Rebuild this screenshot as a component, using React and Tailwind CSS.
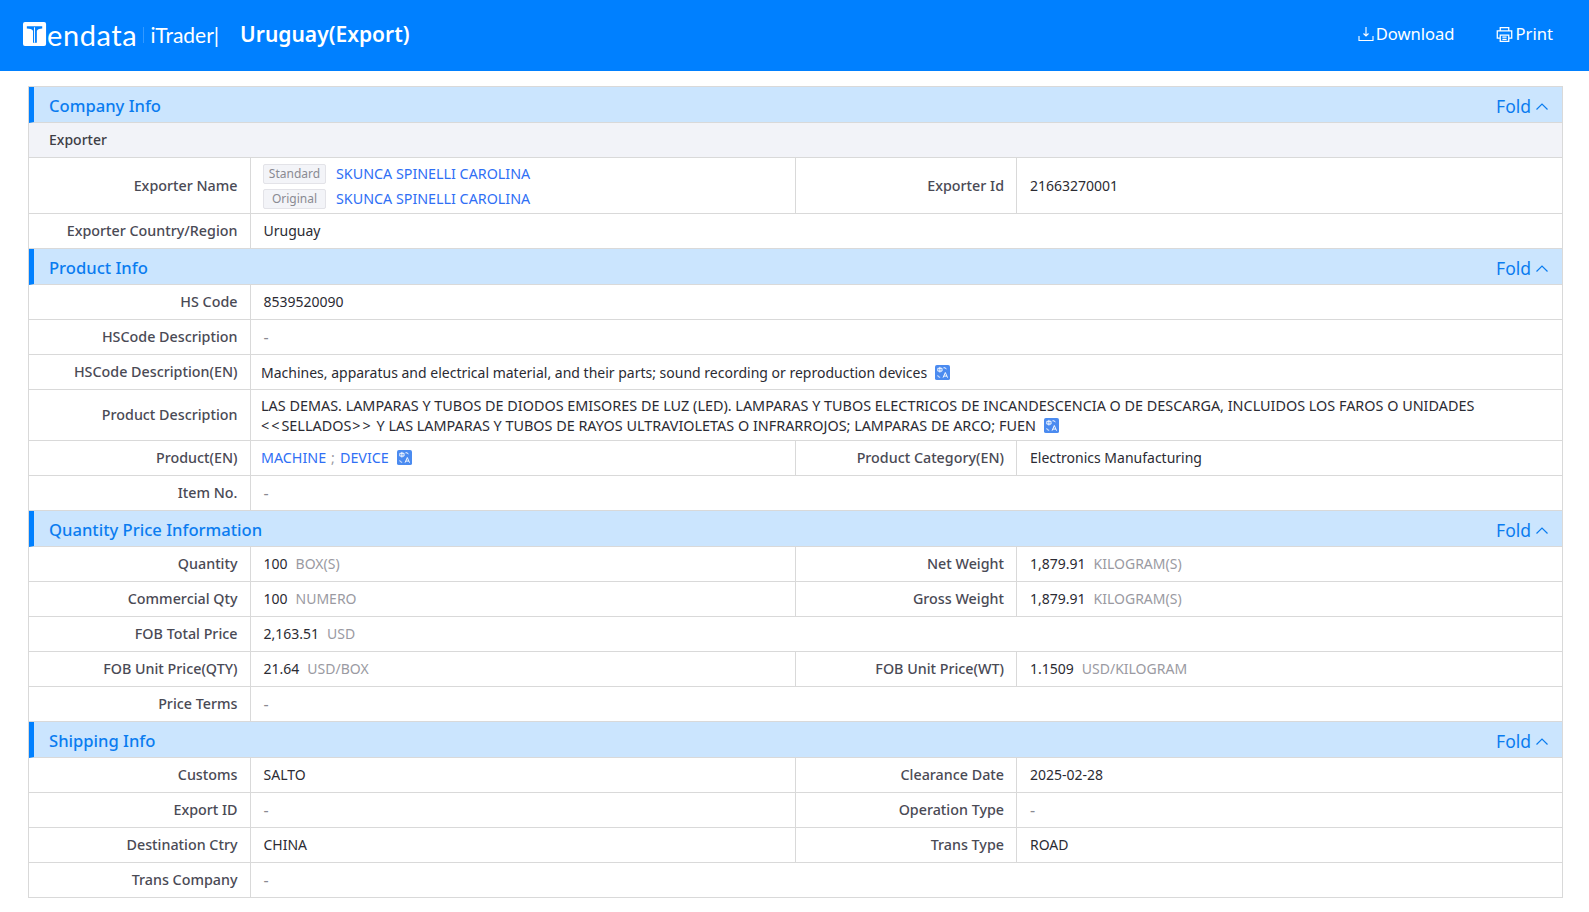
import React from "react";

const FONT = "font-['Noto_Sans','Open_Sans',sans-serif]";

function Translate() {
  return (
    <svg viewBox="0 0 16 16" className="inline-block w-[15px] h-[15px] ml-2 align-[-2px]">
      <rect width="16" height="16" rx="2" fill="#4b8bf0" />
      <path d="M3 3.5h4.5v3H3zM5.2 2v6M3 11c0 1.5 1 2 2.5 2M9 3h2l1 1.5M11 8l-2.4 5.5M11 8l2.4 5.5M9.4 11.8h3.2" stroke="#fff" strokeWidth="1" fill="none" />
    </svg>
  );
}

function Section({ children }) {
  return (
    <div className="h-[36px] flex items-center justify-between bg-[#cbe5fe] border-l-[5px] border-[#0080ff] border-b border-b-[#d9d9d9] pl-[15px] pr-[14px]">
      <span className="text-[16.6px] font-medium text-[#0a7cf0] mt-[3px]">{children}</span>
      <span className="flex items-center text-[17.5px] text-[#0a7cf0] mt-[4px]">
        Fold
        <svg viewBox="0 0 12 7" className="w-[12px] h-[7px] ml-[5px]" fill="none" stroke="#0a7cf0" strokeWidth="1.2">
          <path d="M0.5 6.5 6 1l5.5 5.5" />
        </svg>
      </span>
    </div>
  );
}

function Label({ children, first }) {
  return (
    <div className={`${first ? "w-[222px] pr-[12.5px]" : "w-[221px] pr-[12px]"} shrink-0 flex items-center justify-end border-r border-[#d9d9d9] text-[14.3px] font-medium text-[#4a4a55]`}>
      {children}
    </div>
  );
}

function Val({ children, className = "pl-[13px] pb-[1px] text-[14px]" }) {
  return (
    <div className={`flex-1 flex items-center text-[#2b2b33] min-w-0 ${className}`}>
      {children}
    </div>
  );
}

function Mid({ children }) {
  return (
    <div className="w-[545px] shrink-0 flex items-center pl-[12.5px] pb-[1px] border-r border-[#d9d9d9] text-[14px] text-[#2b2b33]">
      {children}
    </div>
  );
}

function Row({ label, children, h = "h-[35px]" }) {
  return (
    <div className={`flex ${h} border-b border-[#d9d9d9]`}>
      <Label first>{label}</Label>
      {children}
    </div>
  );
}

function Full({ label, children }) {
  return (
    <Row label={label}>
      <Val className="pl-[12.5px] pb-[1px] text-[14px]">{children}</Val>
    </Row>
  );
}

function Two({ a, b, c, d }) {
  return (
    <div className="flex h-[35px] border-b border-[#d9d9d9]">
      <Label first>{a}</Label>
      <Mid>{b}</Mid>
      <Label>{c}</Label>
      <Val>{d}</Val>
    </div>
  );
}

const Dash = () => <span className="text-[16px] text-[#8a8a92]">-</span>;
const Unit = ({ n, u }) => (
  <>
    <span>{n}</span>
    <span className="ml-2 text-[#9a9aa2]">{u}</span>
  </>
);

function Tag({ children }) {
  return (
    <span className="w-[63px] h-[20px] flex items-center justify-center rounded-[2px] border border-[#e3e3e8] bg-[#f3f4f8] text-[12px] text-[#8a8a92]">
      {children}
    </span>
  );
}

export default function App() {
  return (
    <div className={`${FONT} bg-white min-h-[912px]`}>
      <header className="h-[71px] bg-[#0080ff] flex items-center justify-between pl-[23px] pr-[36px] text-white">
        <div className="flex items-center pb-[2px]">
          <svg viewBox="0 0 26 26" className="w-[25px] h-[25px]">
            <rect width="24" height="25" rx="2" fill="#fff" />
            <path d="M4 4.5h16v2.2c-2.5 0-4.6 .8-5.6 2.3V21.5h-4V9c-1-1.5-3.2-2.3-6.4-2.3z" fill="#0080ff" />
            <path d="M12 5.5v16" stroke="#fff" strokeWidth="1" />
          </svg>
          <span className="font-['Lato',sans-serif] text-[29px] leading-none tracking-[0.6px] -ml-[1px]">endata</span>
          <span className="w-px h-[16px] bg-white/20 ml-[6px]"></span>
          <span className="font-['Lato',sans-serif] text-[21px] ml-[6px]">iTrader|</span>
          <span className="text-[21px] font-semibold ml-[21px]">Uruguay(Export)</span>
        </div>
        <div className="flex items-center text-[16.6px] pb-[2px]">
          <svg viewBox="0 0 16 16" className="w-[16px] h-[16px] mr-[2px]" fill="none" stroke="#fff" strokeWidth="1.1">
            <path d="M8 1v9M5.5 7.5 8 10l2.5-2.5M1 10v4.5h14V10" />
          </svg>
          <span>Download</span>
          <svg viewBox="0 0 16 16" className="w-[17px] h-[17px] ml-[41px] mr-[3px]" fill="none" stroke="#fff" strokeWidth="1.2">
            <path d="M4 4V1.5h8V4M4 11.5H1.2V4.5h13.6v7H12M4 8.5h8v6H4zM6 10.5h4M6 12.5h4" />
          </svg>
          <span>Print</span>
        </div>
      </header>

      <main className="pl-[28px] pr-[26px] pt-[15px]">
        <div className="border-l border-r border-t border-[#d9d9d9]">
          <Section>Company Info</Section>
          <div className="h-[35px] flex items-center pl-[20px] pb-[2px] bg-[#f2f3f8] border-b border-[#d9d9d9] text-[14px] font-medium text-[#3d3d45]">Exporter</div>
          <div className="flex h-[56px] border-b border-[#d9d9d9]">
            <Label first>Exporter Name</Label>
            <div className="w-[545px] shrink-0 flex flex-col justify-center gap-[5px] pl-[12px] pt-[2px] border-r border-[#d9d9d9] text-[14.3px] leading-[20px] text-[#2f6ff5]">
              <div className="flex items-center gap-[10px]"><Tag>Standard</Tag><span>SKUNCA SPINELLI CAROLINA</span></div>
              <div className="flex items-center gap-[10px]"><Tag>Original</Tag><span>SKUNCA SPINELLI CAROLINA</span></div>
            </div>
            <Label>Exporter Id</Label>
            <Val>21663270001</Val>
          </div>
          <Full label="Exporter Country/Region">Uruguay</Full>

          <Section>Product Info</Section>
          <Full label="HS Code">8539520090</Full>
          <Full label="HSCode Description"><Dash /></Full>
          <Row label="HSCode Description(EN)">
            <Val className="pl-[10px] text-[14px]">
              <span>Machines, apparatus and electrical material, and their parts; sound recording or reproduction devices<Translate /></span>
            </Val>
          </Row>
          <Row label="Product Description" h="h-[51px]">
            <Val className="pl-[10px] pt-[2px] leading-[20px] text-[14.4px]">
              <span>
                LAS DEMAS. LAMPARAS Y TUBOS DE DIODOS EMISORES DE LUZ (LED). LAMPARAS Y TUBOS ELECTRICOS DE INCANDESCENCIA O DE DESCARGA, INCLUIDOS LOS FAROS O UNIDADES<br /><span className="tracking-[2px]">&lt;&lt;</span>SELLADOS<span className="tracking-[2px] ml-[1px]">&gt;&gt;</span> Y LAS LAMPARAS Y TUBOS DE RAYOS ULTRAVIOLETAS O INFRARROJOS; LAMPARAS DE ARCO; FUEN<Translate />
              </span>
            </Val>
          </Row>
          <div className="flex h-[35px] border-b border-[#d9d9d9]">
            <Label first>Product(EN)</Label>
            <div className="w-[545px] shrink-0 flex items-center pl-[10px] border-r border-[#d9d9d9] text-[14.3px] text-[#2f6ff5]">
              <span>MACHINE<span className="text-[#9a9aa2] mx-[5px]">;</span>DEVICE<Translate /></span>
            </div>
            <Label>Product Category(EN)</Label>
            <Val>Electronics Manufacturing</Val>
          </div>
          <Full label="Item No."><Dash /></Full>

          <Section>Quantity Price Information</Section>
          <Two a="Quantity" b={<Unit n="100" u="BOX(S)" />} c="Net Weight" d={<Unit n="1,879.91" u="KILOGRAM(S)" />} />
          <Two a="Commercial Qty" b={<Unit n="100" u="NUMERO" />} c="Gross Weight" d={<Unit n="1,879.91" u="KILOGRAM(S)" />} />
          <Full label="FOB Total Price"><Unit n="2,163.51" u="USD" /></Full>
          <Two a="FOB Unit Price(QTY)" b={<Unit n="21.64" u="USD/BOX" />} c="FOB Unit Price(WT)" d={<Unit n="1.1509" u="USD/KILOGRAM" />} />
          <Full label="Price Terms"><Dash /></Full>

          <Section>Shipping Info</Section>
          <Two a="Customs" b="SALTO" c="Clearance Date" d="2025-02-28" />
          <Two a="Export ID" b={<Dash />} c="Operation Type" d={<Dash />} />
          <Two a="Destination Ctry" b="CHINA" c="Trans Type" d="ROAD" />
          <Full label="Trans Company"><Dash /></Full>
        </div>
      </main>
    </div>
  );
}
